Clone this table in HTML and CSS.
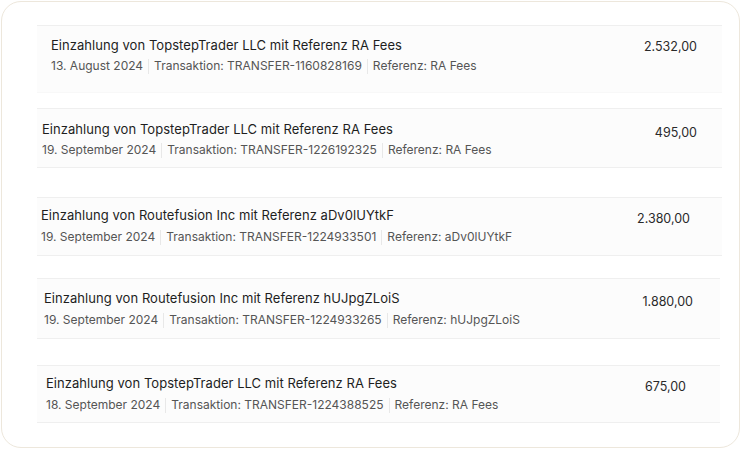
FILE: index.html
```html
<!DOCTYPE html>
<html lang="de">
<head>
<meta charset="utf-8">
<title>Einzahlungen</title>
<link rel="stylesheet" href="styles.css">
</head>
<body>
<div class="card">
  <div class="row r1">
    <div class="info">
      <div class="title">Einzahlung von TopstepTrader LLC mit Referenz RA Fees</div>
      <div class="meta"><span>13. August 2024</span><span class="sep"></span><span>Transaktion: TRANSFER-1160828169</span><span class="sep"></span><span>Referenz: RA Fees</span></div>
    </div>
    <div class="amount">2.532,00</div>
  </div>
  <div class="row r2">
    <div class="info">
      <div class="title">Einzahlung von TopstepTrader LLC mit Referenz RA Fees</div>
      <div class="meta"><span>19. September 2024</span><span class="sep"></span><span>Transaktion: TRANSFER-1226192325</span><span class="sep"></span><span>Referenz: RA Fees</span></div>
    </div>
    <div class="amount">495,00</div>
  </div>
  <div class="row r3">
    <div class="info">
      <div class="title">Einzahlung von Routefusion Inc mit Referenz aDv0lUYtkF</div>
      <div class="meta"><span>19. September 2024</span><span class="sep"></span><span>Transaktion: TRANSFER-1224933501</span><span class="sep"></span><span>Referenz: aDv0lUYtkF</span></div>
    </div>
    <div class="amount">2.380,00</div>
  </div>
  <div class="row r4">
    <div class="info">
      <div class="title">Einzahlung von Routefusion Inc mit Referenz hUJpgZLoiS</div>
      <div class="meta"><span>19. September 2024</span><span class="sep"></span><span>Transaktion: TRANSFER-1224933265</span><span class="sep"></span><span>Referenz: hUJpgZLoiS</span></div>
    </div>
    <div class="amount">1.880,00</div>
  </div>
  <div class="row r5">
    <div class="info">
      <div class="title">Einzahlung von TopstepTrader LLC mit Referenz RA Fees</div>
      <div class="meta"><span>18. September 2024</span><span class="sep"></span><span>Transaktion: TRANSFER-1224388525</span><span class="sep"></span><span>Referenz: RA Fees</span></div>
    </div>
    <div class="amount">675,00</div>
  </div>
</div>
</body>
</html>
```

FILE: styles.css
```css
html, body {
  margin: 0;
  padding: 0;
  background: #ffffff;
}
body {
  font-family: Inter, "Noto Sans", sans-serif;
  width: 741px;
  height: 450px;
  box-sizing: border-box;
  padding: 1px 1px 2px 1px;
}
.card {
  box-sizing: border-box;
  height: 447px;
  border: 1px solid #ede7dc;
  border-radius: 20px;
  background: #ffffff;
  padding: 23px 17px 0 35px;
  display: flex;
  flex-direction: column;
}
.row {
  display: flex;
  justify-content: space-between;
  align-items: flex-start;
  background: #fcfcfc;
  border-top: 1px solid #efefef;
  border-bottom: 1px solid #efefef;
  box-sizing: border-box;
  padding-top: 11px;
}
.info {
  display: flex;
  flex-direction: column;
  gap: 5px;
}
.title {
  font-size: 13px;
  line-height: 16px;
  color: #1e1e1e;
  letter-spacing: 0.05px;
}
.meta {
  display: flex;
  align-items: center;
  font-size: 12px;
  line-height: 16px;
  color: #555555;
}
.sep {
  width: 1px;
  height: 15px;
  background: #e8e8e8;
  margin: 0 5px;
}
.amount {
  font-size: 12.5px;
  line-height: 16px;
  color: #2a2a2a;
}
.r1 { height: 68px; padding-left: 14px; padding-right: 25px; border-bottom-color: #f8f8f8; }
.r1 .amount { margin-top: 2px; }
.r2 { height: 60px; margin-top: 15px; padding-left: 5px; padding-right: 25px; padding-top: 12px; }
.r2 .amount { margin-top: 4px; }
.r3 { height: 59px; margin-top: 29px; padding-left: 4px; padding-right: 32px; padding-top: 9px; }
.r3 .amount { margin-top: 4px; }
.r3 .info { gap: 6px; }
.r4 { height: 61px; margin-top: 22px; padding-left: 7px; padding-right: 27px; }
.r4 .amount { margin-top: 4px; }
.r4 .info { gap: 6px; }
.r5 { height: 58px; margin-top: 26px; padding-left: 9px; padding-right: 34px; padding-top: 9px; }
.r5 .amount { margin-top: 4px; }
.r5 .info { gap: 6px; }
.r4, .r5 { margin-right: 2px; }
```
